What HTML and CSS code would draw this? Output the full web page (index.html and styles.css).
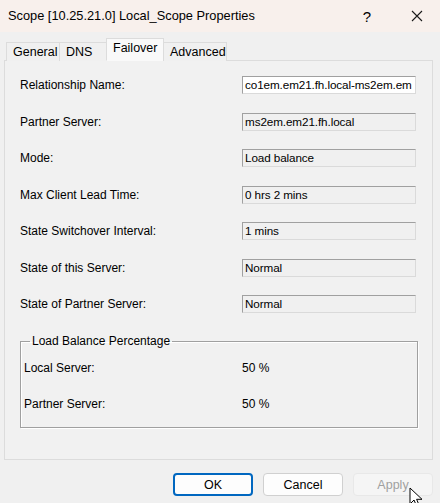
FILE: index.html
```html
<!DOCTYPE html>
<html>
<head>
<meta charset="utf-8">
<link rel="stylesheet" href="styles.css">
</head>
<body>
<div class="window">
  <div class="titlebar">
    <div class="title">Scope [10.25.21.0] Local_Scope Properties</div>
    <div class="cap help">?</div>
    <div class="cap close">
      <svg width="12" height="12" viewBox="0 0 12 12"><path d="M1 1 L11 11 M11 1 L1 11" stroke="#1a1a1a" stroke-width="1.1" fill="none"/></svg>
    </div>
  </div>
  <div class="content">
    <div class="tabs">
      <div class="tab">General</div>
      <div class="tab">DNS</div>
      <div class="tab active">Failover</div>
      <div class="tab">Advanced</div>
    </div>
    <div class="panel">
      <div class="rows">
        <div class="label">Relationship Name:</div><div class="box white">co1em.em21.fh.local-ms2em.em</div>
        <div class="label">Partner Server:</div><div class="box">ms2em.em21.fh.local</div>
        <div class="label">Mode:</div><div class="box">Load balance</div>
        <div class="label">Max Client Lead Time:</div><div class="box">0 hrs 2 mins</div>
        <div class="label">State Switchover Interval:</div><div class="box">1 mins</div>
        <div class="label">State of this Server:</div><div class="box">Normal</div>
        <div class="label">State of Partner Server:</div><div class="box">Normal</div>
      </div>
      <fieldset class="group">
        <legend>Load Balance Percentage</legend>
        <div class="grow"><span class="glabel">Local Server:</span><span>50 %</span></div>
        <div class="grow"><span class="glabel">Partner Server:</span><span>50 %</span></div>
      </fieldset>
    </div>
    <div class="buttons">
      <div class="btn default">OK</div>
      <div class="btn">Cancel</div>
      <div class="btn disabled">Apply</div>
    </div>
  </div>
  <svg class="cursor" width="14" height="22" viewBox="0 0 14 22"><path d="M1 1 L1 17 L5 13 L8 20 L10.5 19 L7.6 12.3 L13 12.3 Z" fill="#fff" stroke="#000" stroke-width="1" stroke-linejoin="round"/></svg>
</div>
</body>
</html>
```
FILE: styles.css
```css
* { box-sizing: border-box; }
html, body { margin: 0; padding: 0; }
body {
  width: 440px;
  height: 503px;
  overflow: hidden;
  background: #f0f0f0;
  font-family: "Liberation Sans", Arial, sans-serif;
  font-size: 12px;
  color: #000;
}
.window { position: relative; width: 440px; height: 503px; }
.titlebar {
  height: 32px;
  background: #f8f0ec;
  display: flex;
  align-items: center;
}
.title {
  flex: 1;
  padding-left: 8px;
  font-size: 12.8px;
  padding-bottom: 1px;
}
.cap {
  display: flex;
  align-items: center;
  justify-content: center;
  height: 32px;
}
.help { width: 46px; font-size: 15px; margin-right: 4px; }
.close { width: 46px; }
.content { padding: 6px 7px 0 4px; }
.tabs {
  display: flex;
  align-items: flex-end;
  padding-left: 2px;
  height: 23px;
  position: relative;
  z-index: 1;
  margin-bottom: -1px;
}
.tab {
  height: 19px;
  padding: 0 6px;
  display: flex;
  align-items: center;
  border: 1px solid #dcdcdc;
  border-bottom: none;
  border-right: none;
  background: #f0f0f0;
  font-size: 12.5px;
}
.tab:nth-child(1) { width: 53px; }
.tab:nth-child(2) { width: 48px; }
.tab:nth-child(4) { width: 64px; border-right: 1px solid #dcdcdc; }
.tab.active {
  height: 23px;
  width: 58px;
  background: #f9f9f9;
  border: 1px solid #dcdcdc;
  border-bottom: 1px solid #f9f9f9;
  align-items: flex-start;
  padding-top: 2px;
  margin: 0 -1px;
}
.panel {
  height: 400px;
  border: 1px solid #dcdcdc;
  background: #f1f1f1;
  padding: 15px 14px 0 15px;
}
.rows {
  display: grid;
  grid-template-columns: 222px 174px;
  grid-auto-rows: 18px;
  row-gap: 18.5px;
  align-items: center;
}
.box {
  height: 18px;
  border: 1px solid #dadada;
  border-top-color: #a0a0a0;
  border-left-color: #a0a0a0;
  background: #f0f0f0;
  padding: 0 2px;
  line-height: 16px;
  font-size: 11.7px;
  letter-spacing: -0.1px;
  white-space: nowrap;
  overflow: hidden;
}
.box.white { background: #fff; }
.group {
  margin: 21px 0 0 0;
  width: 398px;
  height: 94px;
  padding: 12px 3px 0 3px;
  border: 1px solid #a0a0a0;
  box-shadow: inset 1px 1px 0 #fff, 1px 1px 0 #fff;
}
.group legend {
  padding: 0 2px;
  margin-left: 6px;
  font-size: 12px;
}
.grow {
  display: flex;
  height: 16px;
  align-items: center;
  margin-bottom: 20px;
}
.glabel { width: 218px; }
.buttons {
  display: flex;
  justify-content: flex-end;
  gap: 10px;
  margin-top: 13px;
  padding-right: 0;
}
.btn {
  width: 80px;
  height: 23px;
  border: 1px solid #d0d0d0;
  border-radius: 4px;
  background: #fdfdfd;
  display: flex;
  align-items: center;
  justify-content: center;
  font-size: 12.5px;
}
.btn.default { border: 2px solid #0067c0; }
.btn.disabled { background: #f5f5f5; border-color: #e8e8e8; color: #a0a0a0; }
.cursor { position: absolute; left: 409px; top: 487px; }
```
